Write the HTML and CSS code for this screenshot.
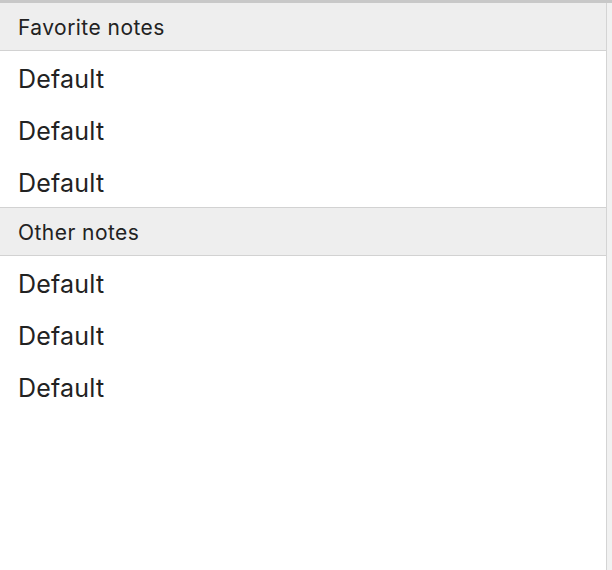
FILE: index.html
```html
<!DOCTYPE html>
<html>
<head>
<meta charset="utf-8">
<link rel="stylesheet" href="styles.css">
</head>
<body>
<div class="window">
  <div class="list">
    <div class="section-header first">Favorite notes</div>
    <div class="item">Default</div>
    <div class="item">Default</div>
    <div class="item">Default</div>
    <div class="section-header">Other notes</div>
    <div class="item">Default</div>
    <div class="item">Default</div>
    <div class="item">Default</div>
  </div>
  <div class="edge"></div>
</div>
</body>
</html>
```
FILE: styles.css
```css
html, body {
  margin: 0;
  padding: 0;
  background: #ffffff;
}
.window {
  display: flex;
  width: 612px;
  height: 570px;
  border-top: 3px solid #c8c8c8;
  box-sizing: border-box;
  font-family: "Inter", "Noto Sans", sans-serif;
  color: #222222;
}
.list {
  flex: 1;
  display: flex;
  flex-direction: column;
}
.edge {
  width: 5px;
  border-left: 1px solid #d4d4d4;
  background: #f1f1f1;
}
.section-header {
  height: 45px;
  padding-top: 2px;
  box-sizing: content-box;
  background: #eeeeee;
  border-top: 1px solid #d2d2d2;
  border-bottom: 1px solid #d2d2d2;
  display: flex;
  align-items: center;
  padding-left: 18px;
  font-size: 21px;
  letter-spacing: 0.45px;
}
.section-header.first {
  border-top: none;
}
.item {
  height: 49px;
  padding-top: 3px;
  display: flex;
  align-items: center;
  padding-left: 18px;
  font-size: 25px;
  letter-spacing: 0.2px;
}
```
